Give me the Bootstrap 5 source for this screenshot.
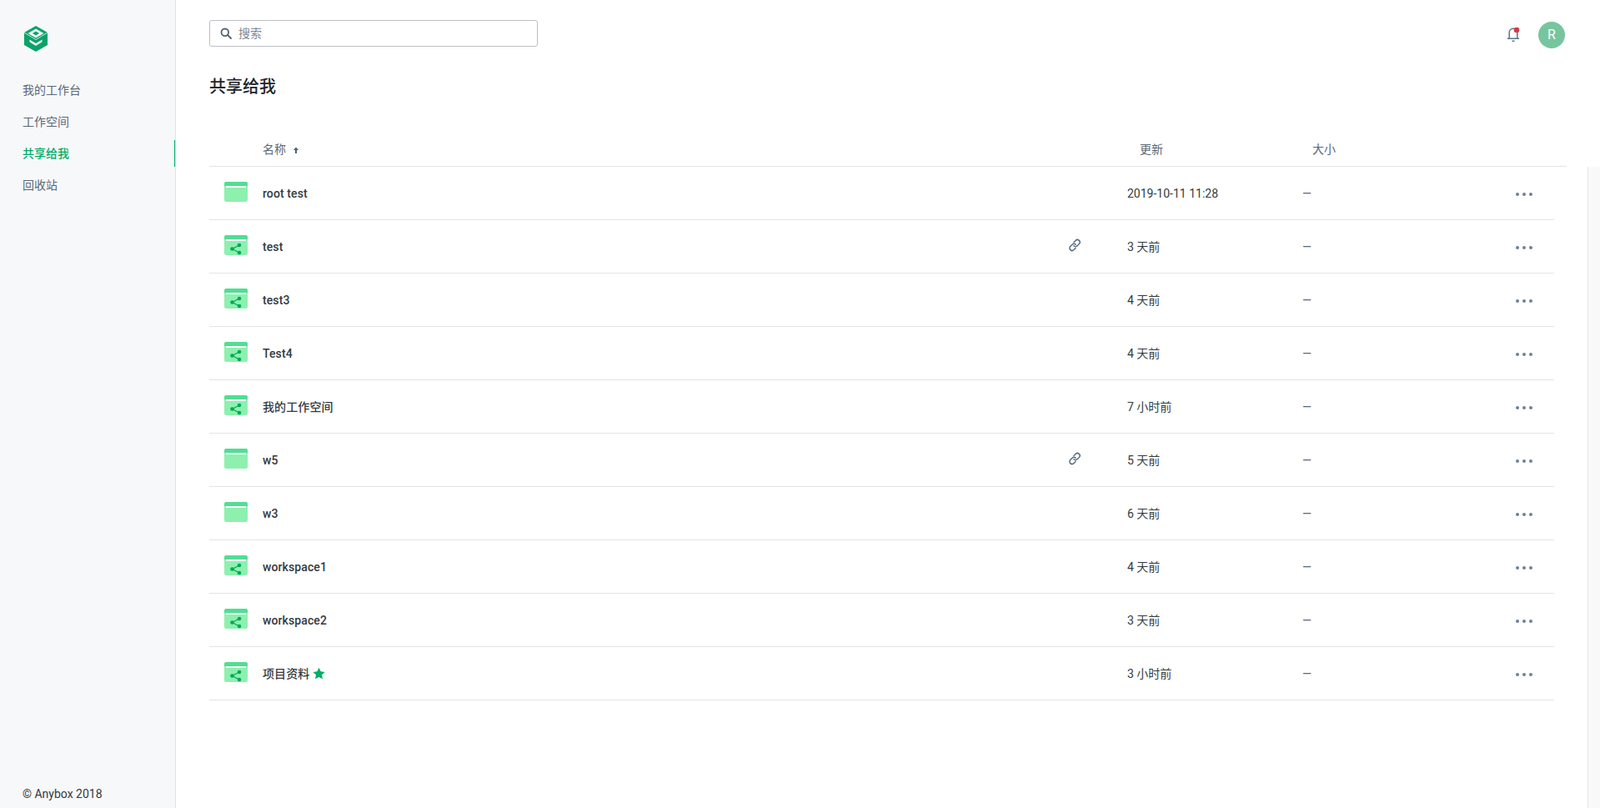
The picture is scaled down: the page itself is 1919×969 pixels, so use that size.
<!DOCTYPE html>
<html lang="zh-CN">
<head>
<meta charset="utf-8">
<title>共享给我</title>
<link href="https://cdn.jsdelivr.net/npm/bootstrap@5.3.0/dist/css/bootstrap.min.css" rel="stylesheet">
<style>
body{font-family:Roboto,"Noto Sans CJK SC",sans-serif;font-size:14px;color:#343a40;height:969px;overflow:hidden;background:#fff}
.side-pane{width:211px;flex:none;background:#f7f8fa;border-right:1px solid #dfe2e6;height:969px;padding-left:27px}
.side-logo{height:31px;margin-top:31px;margin-bottom:27px;margin-left:2px}
.side-link{display:block;height:38px;line-height:38px;color:#5c6773;text-decoration:none;font-size:14px;position:relative}
.side-link.is-on{color:#00ad68;font-weight:500}
.side-link.is-on::after{content:"";position:absolute;right:0;top:3px;height:32px;width:1px;background:#00ad68}
.side-foot{color:#343a40;font-size:14px;line-height:20px;margin-bottom:7px}
.main-pane{padding-left:40px;height:969px;min-width:0}
.top-strip{height:90px;padding-top:24px;padding-right:42px}
.search-box{width:394px;height:32px;border:1px solid #bcbfc3;border-radius:3px;padding-left:12px;gap:8px;color:#7d8791}
.search-box span{font-size:14px}
.top-tools{gap:22px}
.avatar-dot{width:32px;height:32px;border-radius:50%;background:#77c59f;color:#fff;font-size:16px;margin-top:2px}
.page-title{font-size:20px;font-weight:500;line-height:28px;color:#212529;margin:0 0 46px}
.head-row{height:36px;margin-right:40px;border-bottom:1px solid #e2e4e6;color:#5c6773;font-size:14px;padding-bottom:4px}
.sort-arrow{margin-left:5px}
.c-icon{width:64px;flex:none;padding-left:18px}
.c-name{flex:1 1 auto;min-width:0}
.c-link{width:71px;flex:none}
.c-date{width:210px;flex:none}
.c-size{width:257px;flex:none}
.c-more{width:45px;flex:none}
.head-row .c-more{width:60px}
.head-date{padding-left:15px}
.head-size{padding-left:12px}
.list-wrap{width:1613px;flex:none}
.file-row{height:64px;border-bottom:1px solid #e2e4e6}
.file-row .c-name,.file-row .c-date,.file-row .c-size{padding-top:2px}
.file-row .c-more{padding-top:3px}
.file-name{font-weight:500;color:#343a40;letter-spacing:.1px}
.dash{color:#5c6773}
.scroll-track{width:15px;flex:none;background:#f9f9f9;border-left:1px solid #e6e6e6;margin-left:40px;height:769px}
.fav-star{margin-left:4px;vertical-align:-2px}
</style>
</head>
<body class="d-flex">
<svg width="0" height="0" class="position-absolute">
<defs>
<symbol id="folder" viewBox="0 0 28 24">
<rect width="28" height="24" rx="2.5" fill="#8ef0ae"/>
<path d="M0 5V2.5A2.5 2.5 0 0 1 2.5 0h23A2.5 2.5 0 0 1 28 2.5V5z" fill="#50de94"/>
<rect x="2" y="5" width="24" height="2" fill="#fff"/>
</symbol>
<symbol id="folder-share" viewBox="0 0 28 24">
<rect width="28" height="24" rx="2.5" fill="#8ef0ae"/>
<path d="M0 5V2.5A2.5 2.5 0 0 1 2.5 0h23A2.5 2.5 0 0 1 28 2.5V5z" fill="#50de94"/>
<rect x="2" y="5" width="24" height="2" fill="#fff"/>
<path d="M9.500 16.500l8.500-4.500M9.500 16.500l8.500 4.500" stroke="#00a85c" stroke-width="1.200" fill="none"/>
<circle cx="9.500" cy="16.500" r="2.300" fill="#00a85c"/><circle cx="18" cy="12" r="2.300" fill="#00a85c"/><circle cx="18" cy="21" r="2.300" fill="#00a85c"/>
</symbol>
<symbol id="dots" viewBox="0 0 20 4"><circle cx="2" cy="2" r="2" fill="#6f8196"/><circle cx="10" cy="2" r="2" fill="#6f8196"/><circle cx="18" cy="2" r="2" fill="#6f8196"/></symbol>
<symbol id="chain" viewBox="0 0 16 16"><g fill="none" stroke="#5a6d80" stroke-width="1.500" stroke-linecap="round"><path d="M7 4.500l2-2a2.900 2.900 0 0 1 4.300 4.100l-2.200 2.200a2.900 2.900 0 0 1-4.200 0"/><path d="M9 11.500l-2 2a2.900 2.900 0 0 1-4.300-4.100l2.200-2.200a2.900 2.900 0 0 1 4.200 0"/></g></symbol>
</defs>
</svg>

<aside class="side-pane d-flex flex-column">
<div class="side-logo">
<svg width="28" height="31" viewBox="0 0 28 31"><path d="M14 0l14 8v15l-14 8-14-8V8z" fill="#0aa36a"/><path d="M14 3.500l9.500 5.500-9.500 5.500-9.500-5.500z" fill="#f7f8fa"/><path d="M14 6.500l4.200 2.500-4.200 2.500-4.200-2.500z" fill="#0aa36a"/><path d="M0 8l14 8.500L28 8" fill="none" stroke="#f7f8fa" stroke-width=".8"/><path d="M6.500 16.500l7.500 4.500 7.500-4.500v2.800L14 24l-7.500-4.700z" fill="#f7f8fa"/></svg>
</div>
<nav class="flex-grow-1">
<a class="side-link" href="#">我的工作台</a>
<a class="side-link" href="#">工作空间</a>
<a class="side-link is-on" href="#">共享给我</a>
<a class="side-link" href="#">回收站</a>
</nav>
<div class="side-foot">© Anybox 2018</div>
</aside>

<main class="main-pane flex-grow-1 d-flex flex-column">
<div class="top-strip d-flex justify-content-between align-items-start">
<div class="search-box d-flex align-items-center">
<svg width="14" height="14" viewBox="0 0 14 14" fill="none" stroke="#4f6172" stroke-width="1.800"><circle cx="5.800" cy="5.800" r="4.300"/><path d="M9 9l4 4" stroke-linecap="round"/></svg>
<span>搜索</span>
</div>
<div class="top-tools d-flex align-items-center">
<svg width="16" height="18" viewBox="0 0 16 18"><path d="M3.200 14V7a4.800 4.800 0 0 1 9.600 0v7" fill="none" stroke="#5f7286" stroke-width="1.500"/><path d="M1 14.300h14M6.500 17.200h3" stroke="#5f7286" stroke-width="1.500"/><circle cx="12" cy="4" r="3.300" fill="#d63a46"/></svg>
<div class="avatar-dot d-flex align-items-center justify-content-center">R</div>
</div>
</div>
<h1 class="page-title">共享给我</h1>
<div class="head-row d-flex align-items-center">
<div class="c-icon"></div>
<div class="c-name">名称 <svg class="sort-arrow" width="8" height="8" viewBox="0 0 8 8"><path d="M4 0.500L7 4H5v4H3V4H1z" fill="#4f6172"/></svg></div>
<div class="c-link"></div>
<div class="c-date head-date">更新</div>
<div class="c-size head-size">大小</div>
<div class="c-more"></div>
</div>
<div class="d-flex flex-grow-1">
<div class="list-wrap" id="rows"></div>
<div class="scroll-track"></div>
</div>
</main>

<script>
var data=[
["root test",0,0,"2019-10-11 11:28"],["test",1,1,"3 天前"],["test3",1,0,"4 天前"],["Test4",1,0,"4 天前"],
["我的工作空间",1,0,"7 小时前"],["w5",0,1,"5 天前"],["w3",0,0,"6 天前"],["workspace1",1,0,"4 天前"],
["workspace2",1,0,"3 天前"],["项目资料",1,0,"3 小时前",1]];
document.getElementById('rows').innerHTML=data.map(function(d){
return '<div class="file-row d-flex align-items-center">'+
'<div class="c-icon d-flex"><svg width="28" height="24" style="margin-top:-3px"><use href="#'+(d[1]?'folder-share':'folder')+'"/></svg></div>'+
'<div class="c-name file-name">'+d[0]+(d[4]?'<svg class="fav-star" width="15" height="15" viewBox="0 0 24 24"><path d="M12 1l3.500 7.400 8 1-5.900 5.500 1.600 8L12 19l-7.200 3.900 1.600-8L.5 9.400l8-1z" fill="#00ad68"/></svg>':'')+'</div>'+
'<div class="c-link d-flex justify-content-start">'+(d[2]?'<svg width="16" height="16" style="margin-top:-3px"><use href="#chain"/></svg>':'')+'</div>'+
'<div class="c-date">'+d[3]+'</div>'+
'<div class="c-size dash">—</div>'+
'<div class="c-more d-flex"><svg width="20" height="4" style="margin-left:-1px"><use href="#dots"/></svg></div>'+
'</div>';}).join('');
</script>
<script src="https://cdn.jsdelivr.net/npm/bootstrap@5.3.0/dist/js/bootstrap.bundle.min.js"></script>
</body>
</html>
